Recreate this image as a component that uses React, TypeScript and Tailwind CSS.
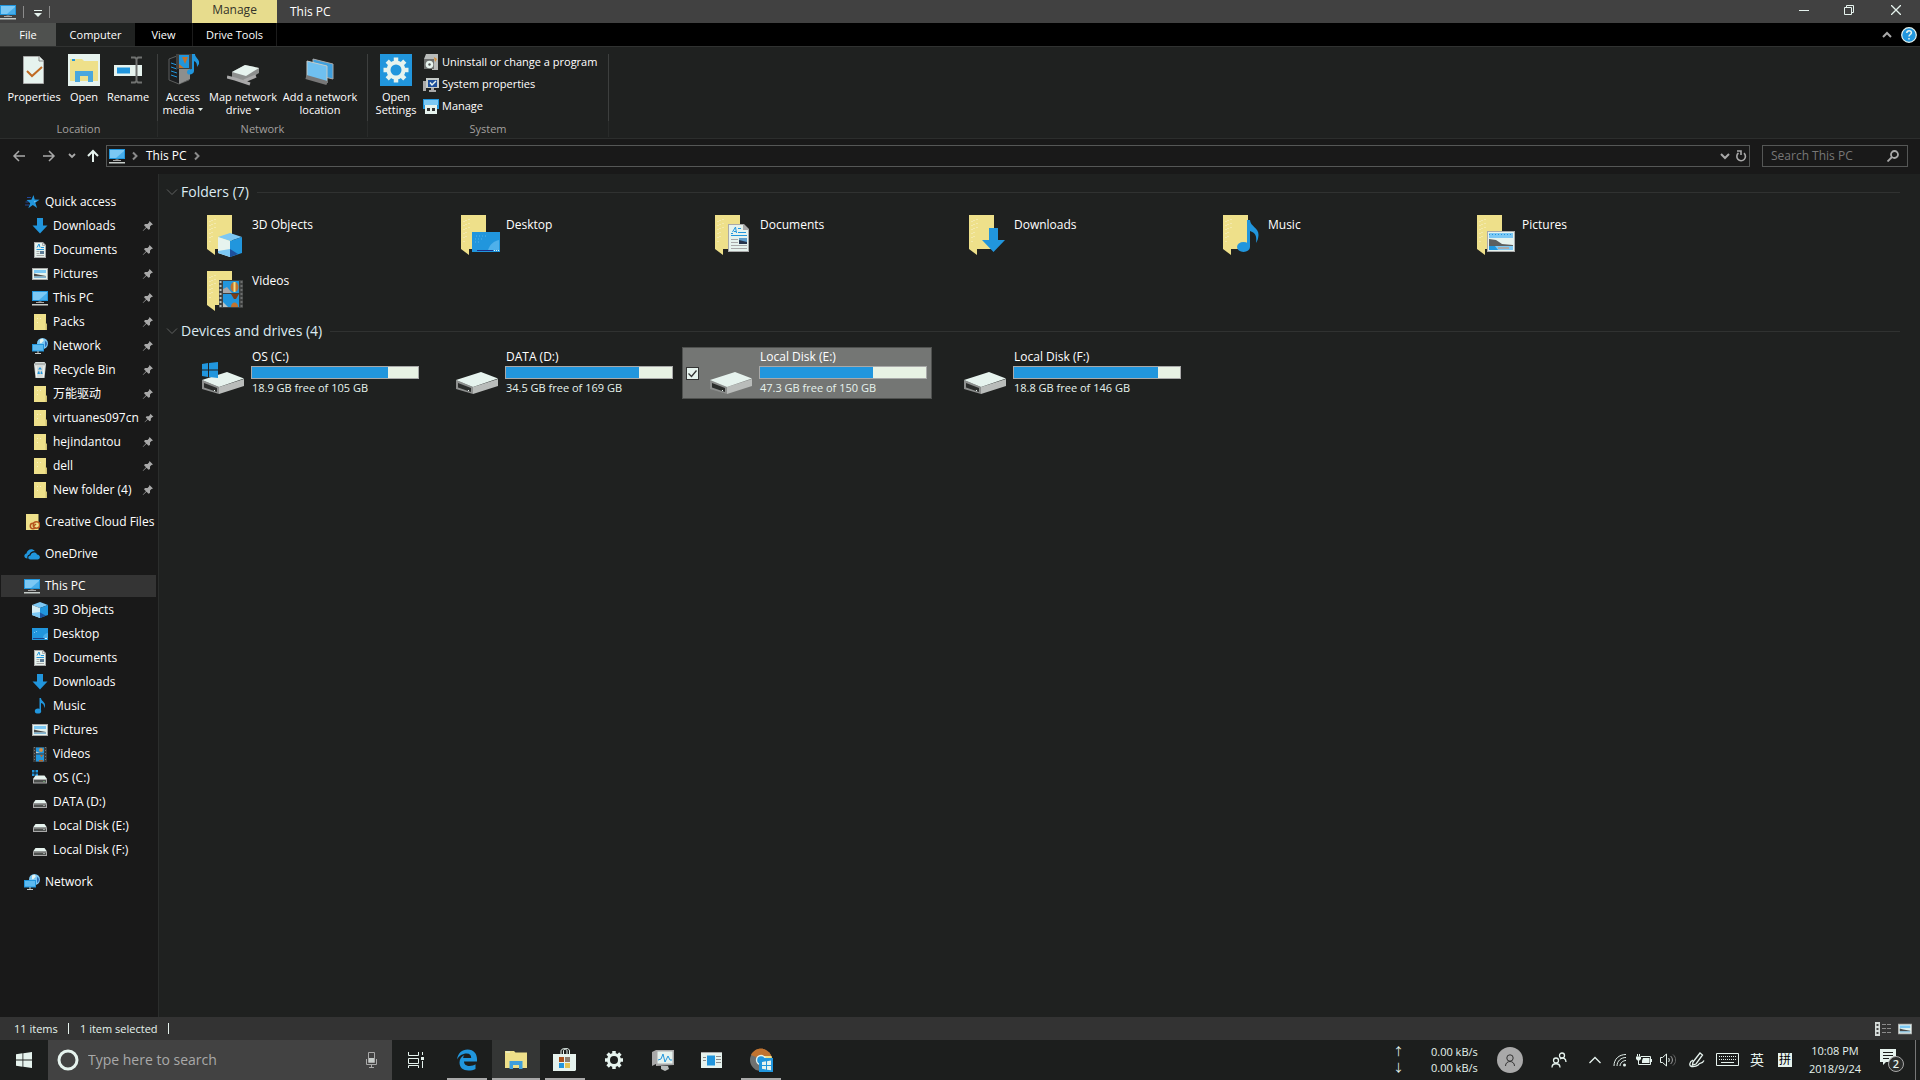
import clsx from 'clsx';
import { ReactNode } from 'react';

type IconName =
  | 'star'
  | 'download'
  | 'document'
  | 'picture'
  | 'pc'
  | 'folder'
  | 'network'
  | 'bin'
  | 'cloudFolder'
  | 'onedrive'
  | 'cube'
  | 'desktop'
  | 'music'
  | 'video'
  | 'osDrive'
  | 'drive';

const icons: Record<IconName, ReactNode> = {
  star: (
    <>
      <path d="M9.500 1l1.200 4.600 4.800.2-4.200 2.900 1.800 5.300-4.300-3-4.500 3.200 1.900-5L2.500 6l4.900-.3z" fill="#2196dd" />
      <path d="M3 3.500h4M1 11h4M1.500 8h3" stroke="#23489b" />
      <path d="M9.200 4l.6 3 3 .3-2.600 1.300" fill="#7cc8f4" />
    </>
  ),
  download: <path d="M5 0h6v7.500h4.500L8 15.500.500 7.500H5z" fill="#2196dd" />,
  document: (
    <>
      <path d="M2 0h9l3 3v13H2z" fill="#a9a9a9" />
      <path d="M3 1h7.500L13 3.500V15H3z" fill="#e6f3ee" />
      <path d="M10.500 1v2.500H13" fill="none" stroke="#a9a9a9" />
      <path d="M5 5.500L7 2l1 3.500M9 5.500h3M4.500 7.500h7.500" fill="none" stroke="#2196dd" />
      <path d="M4.500 9.500h3M4.500 11.500h3M4.500 13.500h7.500" stroke="#a9a9a9" />
      <path d="M8 9h4v3H8z" fill="#5a7a94" />
    </>
  ),
  picture: (
    <>
      <path d="M0 2h16v12H0z" fill="#a9a9a9" />
      <path d="M1 3h14v10H1z" fill="#e6f3ee" />
      <path d="M2 4h12v3H2z" fill="#7cc8f4" />
      <path d="M2 7.500l4 1 8 1.500v.500H2z" fill="#4a4a4a" />
      <path d="M2 10.500h12V12H2z" fill="#7fb5d5" />
    </>
  ),
  pc: (
    <>
      <path d="M0 1h16v10H0z" fill="#2196dd" />
      <path d="M1 2h14v8H1z" fill="#7cc8f4" />
      <path d="M15 3v7H7z" fill="#47adea" />
      <path d="M6.500 11h3v1.500h-3z" fill="#707070" />
      <path d="M4 12h8v1H4z" fill="#a9a9a9" />
      <path d="M0 14h16v1.500H0z" fill="#c6ccc9" />
    </>
  ),
  folder: (
    <>
      <path d="M2 0h12v9.500l1 .5v6H2z" fill="#eee08a" />
      <path d="M14 2v7.500l1 .5v6h-1.500V10" fill="#cfc070" />
      <path d="M5 4h1v1H5zM8 4h1v1H8zM5 8h1v1H5z" fill="#f7efc0" />
    </>
  ),
  network: (
    <>
      <circle cx="10.500" cy="5.500" r="5.500" fill="#7cc8f4" />
      <path d="M8 1.500c2-2 5 0 3 2s-2 2-3 1.500z" fill="#e6f3ee" />
      <path d="M13 3c3 1 2 5 0 6z" fill="#2d6cb8" />
      <path d="M0 6h12v7.500H0z" fill="#2196dd" />
      <path d="M1 7h10v5.500H1z" fill="#5dbaf0" />
      <path d="M5 13.500h2v1H5zM3 15h6v1H3z" fill="#c6ccc9" />
    </>
  ),
  bin: (
    <>
      <path d="M2 2l1.500-2h9L14 2l-1.500 14h-9z" fill="#d6dcda" />
      <path d="M3 1.500h10v1H3z" fill="#8b8f8d" />
      <path d="M4 4l.7 11M12 4l-.7 11" stroke="#f3f7f5" />
      <path d="M8 5l2 2.500H6zM5.500 11L7 8.500 8 12H5.500zM10.500 11L9 8.500 8.500 12h2z" fill="#2196dd" />
    </>
  ),
  cloudFolder: (
    <>
      <path d="M2 0h12.500v16H2z" fill="#eee08a" />
      <circle cx="9" cy="12" r="2.700" fill="none" stroke="#b5551f" strokeWidth="1.500" />
      <circle cx="12.500" cy="11" r="3.200" fill="#eee08a" stroke="#b5551f" strokeWidth="1.500" />
      <path d="M9 12.500l3-2.500" stroke="#b5551f" strokeWidth="1.500" />
    </>
  ),
  onedrive: (
    <>
      <path d="M3.500 12.500C-.500 12.500-.500 8 2.500 7.500 3 3.500 8 1.500 10.800 5 8 5 6 6.500 5.500 8.500 3.500 9 3 11 3.500 12.500z" fill="#2196dd" />
      <path d="M6.500 13.500c-3 0-3-4 0-4 .5-3.500 5.500-4 6.500-1 3.500 0 4 5 .5 5z" fill="#2196dd" />
    </>
  ),
  cube: (
    <>
      <path d="M8 0l8 3-8 3-8-3z" fill="#7cc8f4" />
      <path d="M0 3l8 3v10l-8-3z" fill="#d5eef5" />
      <path d="M16 3L8 6v10l8-3z" fill="#2196dd" />
      <path d="M0 11l8-1v6l-8-3z" fill="#7cc8f4" />
      <path d="M8 10.500l6 3.300L8 16z" fill="#1d55a0" />
    </>
  ),
  desktop: (
    <>
      <path d="M0 2h16v12H0z" fill="#2196dd" />
      <path d="M11 11c1-3 3-4 5-4v5h-5z" fill="#47adea" />
      <path d="M1 12.500h11" stroke="#1c3f86" />
      <path d="M13 12.500h2" stroke="#e6f3ee" />
      <path d="M2 6h1v1H2zM4 5h1v1H4z" fill="#7cc8f4" />
    </>
  ),
  music: (
    <>
      <ellipse cx="6" cy="13" rx="3.200" ry="2.600" fill="#2196dd" />
      <path d="M7.500 0H9c0 3 4.500 4 4 7.500-.2 1.200-.5 2-1 2.500.5-3-1-4.500-3-5v8H7.500z" fill="#2196dd" />
    </>
  ),
  video: (
    <>
      <path d="M1 1h14v15H1z" fill="#3a3a3a" />
      <path d="M2.500 1v15M13.500 1v15" stroke="#777" strokeDasharray="1 2" />
      <path d="M4 1.500h8v6H4zM4 8.500h8v7H4z" fill="#2196dd" />
      <circle cx="9" cy="4" r="2" fill="#d99146" />
      <path d="M4 5.500l4 1.500H4z" fill="#c8c8c8" />
      <path d="M8 9h3l-1.500 2.500zM7 14h4v1.500H7z" fill="#b5672a" />
    </>
  ),
  osDrive: (
    <>
      <path d="M0 0h2.500v2.500H0zM3.500 0H6v2.500H3.500zM0 3.500h2.500V6H0zM3.500 3.500H6V6H3.500z" fill="#2196dd" />
      <path d="M3.500 5.500h9L15 9H1z" fill="#e6f3ee" />
      <path d="M1 9h14v4.500H1z" fill="#a9a9a9" />
      <path d="M2 10h12v2.500H2z" fill="#4c4f4d" />
      <path d="M11.500 11h1v1h-1z" fill="#8fe08f" />
    </>
  ),
  drive: (
    <>
      <path d="M3.500 6h9L15 9.500H1z" fill="#e6f3ee" />
      <path d="M1 9.500h14V14H1z" fill="#a9a9a9" />
      <path d="M2 10.500h12V13H2z" fill="#4c4f4d" />
      <path d="M11.500 11h1v1h-1z" fill="#e6f3ee" />
    </>
  ),
};

function Icon({ name, className = 'h-4 w-4' }: { name: IconName; className?: string }) {
  return (
    <svg viewBox="0 0 16 16" className={clsx('shrink-0', className)} aria-hidden>
      {icons[name]}
    </svg>
  );
}

interface TreeItem {
  label: string;
  icon: IconName;
  top?: boolean;
  pinned?: boolean;
  active?: boolean;
}

const tree: TreeItem[][] = [
  [
    { label: 'Quick access', icon: 'star', top: true },
    { label: 'Downloads', icon: 'download', pinned: true },
    { label: 'Documents', icon: 'document', pinned: true },
    { label: 'Pictures', icon: 'picture', pinned: true },
    { label: 'This PC', icon: 'pc', pinned: true },
    { label: 'Packs', icon: 'folder', pinned: true },
    { label: 'Network', icon: 'network', pinned: true },
    { label: 'Recycle Bin', icon: 'bin', pinned: true },
    { label: '万能驱动', icon: 'folder', pinned: true },
    { label: 'virtuanes097cn', icon: 'folder', pinned: true },
    { label: 'hejindantou', icon: 'folder', pinned: true },
    { label: 'dell', icon: 'folder', pinned: true },
    { label: 'New folder (4)', icon: 'folder', pinned: true },
  ],
  [{ label: 'Creative Cloud Files', icon: 'cloudFolder', top: true }],
  [{ label: 'OneDrive', icon: 'onedrive', top: true }],
  [
    { label: 'This PC', icon: 'pc', top: true, active: true },
    { label: '3D Objects', icon: 'cube' },
    { label: 'Desktop', icon: 'desktop' },
    { label: 'Documents', icon: 'document' },
    { label: 'Downloads', icon: 'download' },
    { label: 'Music', icon: 'music' },
    { label: 'Pictures', icon: 'picture' },
    { label: 'Videos', icon: 'video' },
    { label: 'OS (C:)', icon: 'osDrive' },
    { label: 'DATA (D:)', icon: 'drive' },
    { label: 'Local Disk (E:)', icon: 'drive' },
    { label: 'Local Disk (F:)', icon: 'drive' },
  ],
  [{ label: 'Network', icon: 'network', top: true }],
];

// what lies over the lower right corner of each library folder
const folders: { label: string; overlay: ReactNode }[] = [
  {
    label: '3D Objects',
    overlay: (
      <>
        <path d="M32 23l12 4-12 4-12-4z" fill="#7cc8f4" />
        <path d="M20 27l12 4v16l-12-4z" fill="#e6f3ee" />
        <path d="M44 27l-12 4v16l12-4z" fill="#2196dd" />
        <path d="M20 41l12-2v8l-12-4z" fill="#7cc8f4" />
        <path d="M32 39l8 5-8 3z" fill="#1d4f9c" />
      </>
    ),
  },
  {
    label: 'Desktop',
    overlay: (
      <>
        <path d="M20 22h28v20H20z" fill="#2196dd" />
        <path d="M36 40c2-6 6-9 11-10v10z" fill="#4fb0ea" />
        <path d="M24 26h10M23 29h8M23 32h6" stroke="#55b4ec" strokeDasharray="1 2" />
        <path d="M25 40.500h16" stroke="#1c2f86" />
        <path d="M42 40.500h5" stroke="#e6f3ee" strokeDasharray="1 1" />
      </>
    ),
  },
  {
    label: 'Documents',
    overlay: (
      <>
        <path d="M22 14h16l5 5v23H22z" fill="#a9a9a9" />
        <path d="M23 15h14v5h5v21H23z" fill="#e6f3ee" />
        <path d="M25 23.500h2M26.500 22l3-5 1 6M28 21.500h2M32 18.500h3M32 22.500h8" fill="none" stroke="#2196dd" />
        <path d="M25 25.500h16" stroke="#2196dd" />
        <path d="M25 29.500h7M25 32.500h7M25 35.500h16M25 38.500h16" stroke="#a9a9a9" />
        <path d="M33 28h8v6h-8z" fill="#5d9dcb" />
        <path d="M33 30l8 2v2h-8z" fill="#26344c" />
      </>
    ),
  },
  {
    label: 'Downloads',
    overlay: <path d="M29 18h9v12h7L33.500 42 22 30h7z" fill="#2196dd" />,
  },
  {
    label: 'Music',
    overlay: (
      <>
        <ellipse cx="29.500" cy="37" rx="6.500" ry="5" fill="#2196dd" />
        <path d="M33 10h3c0 6 9 8 8.500 15-.2 3-1 6-2.500 8 1-8-1-10-6-12v16h-3z" fill="#2196dd" />
      </>
    ),
  },
  {
    label: 'Pictures',
    overlay: (
      <>
        <path d="M19 21h28v21H19z" fill="#a9a9a9" />
        <path d="M20 22h26v19H20z" fill="#e6f3ee" />
        <path d="M21 23h24v5H21z" fill="#7cc8f4" />
        <path d="M21 24.500h24" stroke="#2196dd" strokeDasharray="1 2" />
        <path d="M21 29l7 1 6 4 11 1v1H21z" fill="#5d5f5e" />
        <path d="M21 36h24v4H21z" fill="#7cc8f4" />
        <path d="M21 36h6l3 4h-9z" fill="#2196dd" />
        <path d="M30 38h11" stroke="#a9a9a9" strokeWidth="2" />
      </>
    ),
  },
  {
    label: 'Videos',
    overlay: (
      <>
        <path d="M21 14h24v28H21z" fill="#3f4140" />
        <path d="M22.500 15v26" stroke="#e6f3ee" strokeWidth="2" strokeDasharray="2 2" opacity=".7" />
        <path d="M43.500 15v26" stroke="#6d6f6e" strokeWidth="2" strokeDasharray="2 2" />
        <path d="M25 15h16v12H25zM25 28h16v13H25z" fill="#2196dd" />
        <ellipse cx="36.500" cy="21" rx="4" ry="5" fill="#c1732f" />
        <path d="M36.500 16v10" stroke="#eee08a" strokeWidth="2" />
        <path d="M25 23l4-2 5 6h-9z" fill="#a9a9a9" />
        <path d="M33 28h8l-3 5h-2z" fill="#7a3d17" />
        <path d="M33 41c0-6 7-6 7 0z" fill="#c1732f" />
        <path d="M25 36l5 5h-5z" fill="#b9c4c4" />
      </>
    ),
  },
];

const drives = [
  { label: 'OS (C:)', used: 82, free: '18.9 GB free of 105 GB', os: true },
  { label: 'DATA (D:)', used: 80, free: '34.5 GB free of 169 GB' },
  { label: 'Local Disk (E:)', used: 68, free: '47.3 GB free of 150 GB', selected: true },
  { label: 'Local Disk (F:)', used: 87, free: '18.8 GB free of 146 GB' },
];

function Chevron({ className, d }: { className?: string; d: string }) {
  return (
    <svg viewBox="0 0 12 12" className={clsx('h-3 w-3 shrink-0', className)} aria-hidden>
      <path d={d} fill="none" stroke="currentColor" strokeWidth="2" />
    </svg>
  );
}

const DOWN = 'M2 4l4 4 4-4';
const RIGHT = 'M4 2.500l3.500 3.500L4 9.500';

function TitleBar() {
  return (
    <header className="flex h-[23px] bg-[#414141]">
      <div className="flex w-48 items-center">
        <Icon name="pc" />
        <span className="ml-[7px] h-3 w-px bg-[#8b8b8b]" />
        <button aria-label="Customize Quick Access Toolbar" className="ml-2 h-4 w-3">
          <svg viewBox="0 0 12 16" className="h-4 w-3">
            <path d="M2 6.500h8" stroke="#e6f3ee" />
            <path d="M2 9h8l-4 4z" fill="#e6f3ee" />
          </svg>
        </button>
        <span className="ml-[5px] h-3 w-px bg-[#8b8b8b]" />
      </div>
      <div className="w-[85px] bg-[#e7dc8d] text-center leading-5 text-[#33332a]">Manage</div>
      <h1 className="ml-[13px] grow leading-6">This PC</h1>
      <div className="flex text-[#e6f3ee]">
        <button aria-label="Minimize" className="flex h-5 w-[46px] items-center justify-center">
          <svg viewBox="0 0 10 10" className="h-[10px] w-[10px]"><path d="M0 5.500h10" stroke="currentColor" /></svg>
        </button>
        <button aria-label="Restore" className="flex h-5 w-11 items-center justify-center">
          <svg viewBox="0 0 10 10" className="h-[10px] w-[10px]">
            <path d="M.5 2.500h7v7h-7zM2.500 2V.5h7v7H8" fill="none" stroke="currentColor" />
          </svg>
        </button>
        <button aria-label="Close" className="flex h-5 w-[49px] items-center justify-center">
          <svg viewBox="0 0 10 10" className="h-[10px] w-[10px]"><path d="M0 0l10 10M10 0L0 10" stroke="currentColor" strokeWidth="1.300" /></svg>
        </button>
      </div>
    </header>
  );
}

function RibbonTabs() {
  return (
    <div className="flex h-[23px] items-stretch bg-black text-[11px]">
      <button className="w-14 bg-[#4f514f]">File</button>
      <button className="w-[79px] bg-[#202221]">Computer</button>
      <button className="w-[57px]">View</button>
      <button className="w-[85px] border-x border-[#1c1c1c]">Drive Tools</button>
      <div className="ml-auto flex items-center pr-[3px]">
        <button aria-label="Collapse the Ribbon" className="mr-2 text-[#a9a9a9]">
          <Chevron d="M2 8l4-4 4 4" />
        </button>
        <button aria-label="Help">
          <svg viewBox="0 0 16 16" className="h-4 w-4">
            <circle cx="8" cy="8" r="7.300" fill="#2196dd" stroke="#e6f3ee" strokeWidth="1.200" />
            <path d="M5.800 6c0-3 4.600-3 4.600-.300C10.400 7.500 8 7.600 8 9.600M8 11v1.500" fill="none" stroke="#e6f3ee" strokeWidth="1.500" />
          </svg>
        </button>
      </div>
    </div>
  );
}

function RibbonButton({ width, lines, menu, children }: { width: string; lines: string[]; menu?: boolean; children: ReactNode }) {
  return (
    <button className={clsx('flex flex-col items-center', width)}>
      <svg viewBox="0 0 32 32" className="mb-1 h-8 w-8" aria-hidden>{children}</svg>
      {lines.map((line, i) => (
        <span key={line} className="flex items-center leading-[13px] whitespace-nowrap">
          {line}
          {menu && i === lines.length - 1 && (
            <svg viewBox="0 0 5 3" className="ml-1 h-[3px] w-[5px]" aria-hidden><path d="M0 0h5L2.500 3z" fill="#e6f3ee" /></svg>
          )}
        </span>
      ))}
    </button>
  );
}

function RibbonGroup({ label, width, children }: { label: string; width: string; children: ReactNode }) {
  return (
    <section aria-label={label} className={clsx('flex flex-col pt-[5px]', width)}>
      <div className="flex h-[67px] shrink-0 border-r border-[#3d3f3e] pl-1">{children}</div>
      <div className="border-r border-[#292b2a] text-center leading-4 text-[#a3a09f]">{label}</div>
    </section>
  );
}

function Ribbon() {
  return (
    <div className="flex h-[93px] border-t border-b border-[#303231] border-b-[#2c2e2d] bg-[#1f2120] pt-[2px] text-[11px]">
      <RibbonGroup label="Location" width="w-[158px]">
        <RibbonButton width="w-[60px]" lines={['Properties']}>
          <path d="M5.500 2.500h16l4 4v23h-20z" fill="#e6f3ee" stroke="#a9a9a9" />
          <path d="M21 2v5h5" fill="none" stroke="#8b8b8b" />
          <path d="M9 17l5 5 10-9" fill="none" stroke="#c06a22" strokeWidth="2" />
        </RibbonButton>
        <RibbonButton width="w-10" lines={['Open']}>
          <path d="M0 0h32v32H0z" fill="#e6f3ee" />
          <path d="M2 5h12l2 2h14v20H2z" fill="#eee08a" />
          <path d="M4 6h3" stroke="#2196dd" strokeWidth="2" />
          <path d="M7 17h18v11h-5v-6h-8v6H7z" fill="#4aa7dd" />
        </RibbonButton>
        <RibbonButton width="w-12" lines={['Rename']}>
          <path d="M2 11h28v11H2z" fill="#e6f3ee" />
          <path d="M5 13.500h13v6H5z" fill="#2196dd" />
          <path d="M24.500 4v24M19 3.500h4l1.500 1.500L26 3.500h4M19 28.500h4l1.500-1.500 1.500 1.500h4" fill="none" stroke="#707270" strokeWidth="2" />
        </RibbonButton>
      </RibbonGroup>
      <RibbonGroup label="Network" width="w-[210px]">
        <RibbonButton width="w-[42px]" lines={['Access', 'media']} menu>
          <path d="M2 5l8-3 12 3v21l-10 4-10-4z" fill="#1b1d1f" stroke="#5d5f5e" />
          <path d="M12 9l11-3v19l-11 5z" fill="#8d8f8e" />
          <path d="M4 9l6 2M4 13l6 2M4 17l6 2M4 21l6 2" stroke="#2196dd" />
          <path d="M9 0h16v15H9z" fill="#3f4140" />
          <path d="M12 1h10v13H12z" fill="#2196dd" />
          <path d="M15 3h6l-3 7zM12 10l5 4h-5z" fill="#c1732f" />
          <path d="M25 0h3c0 4 5 5 4 10l-2 3c0-4-1-5-3-6v10c0 4-7 5-7 1 0-2 2-3 5-3z" fill="#2196dd" />
        </RibbonButton>
        <RibbonButton width="w-[78px]" lines={['Map network', 'drive']} menu>
          <path d="M5 18l13-7 14 3v5l-13 8-14-3z" fill="#8d8f8e" />
          <path d="M5 18l13-7 14 3-13 8z" fill="#e6f3ee" />
          <path d="M0 23l8 2 15 5M17 27l12-5" fill="none" stroke="#a9a9a9" strokeWidth="3" />
        </RibbonButton>
        <RibbonButton width="w-[76px]" lines={['Add a network', 'location']}>
          <path d="M9 5l20 5v15l-20-5z" fill="#3f9fdc" stroke="#a9a9a9" />
          <path d="M3 7l20 5v17L3 24z" fill="#6fc0f0" stroke="#c6ccc9" />
          <path d="M2 23l21 6" stroke="#777" strokeWidth="4" />
        </RibbonButton>
      </RibbonGroup>
      <RibbonGroup label="System" width="w-[241px]">
        <RibbonButton width="w-12" lines={['Open', 'Settings']}>
          <path d="M0 0h32v32H0z" fill="#2196dd" />
          <path d="M16 3.500v25M3.500 16h25M7.200 7.200l17.600 17.600M24.800 7.200L7.200 24.800" stroke="#e6f3ee" strokeWidth="4.500" />
          <circle cx="16" cy="16" r="9.500" fill="#e6f3ee" />
          <circle cx="16" cy="16" r="5.500" fill="#2196dd" />
        </RibbonButton>
        <div className="ml-[3px] flex flex-col gap-[6px]">
          <button className="flex h-4 items-center gap-[3px] whitespace-nowrap">
            <svg viewBox="0 0 16 16" className="h-4 w-4" aria-hidden>
              <path d="M3 0h12v16H9V5H1z" fill="#b9bcba" />
              <path d="M1 5h10v10H1z" fill="#6f7170" />
              <circle cx="6.500" cy="10.500" r="3.800" fill="#e6f3ee" />
              <circle cx="6.500" cy="10.500" r="1.200" fill="#555" />
              <path d="M11 3l3 2-2 3z" fill="#d9913c" />
            </svg>
            Uninstall or change a program
          </button>
          <button className="flex h-4 items-center gap-[3px] whitespace-nowrap">
            <svg viewBox="0 0 16 16" className="h-4 w-4" aria-hidden>
              <path d="M0 5h3v10H0z" fill="#a9a9a9" />
              <path d="M3 2h13v10H3z" fill="#c6ccc9" />
              <path d="M5 4h9v7H5z" fill="#1d4f9c" />
              <path d="M7 6.500l2 2.500 4-4" fill="none" stroke="#e6f3ee" strokeWidth="1.500" />
              <path d="M8 12h3v2h2v2H6v-2h2z" fill="#a9a9a9" />
            </svg>
            System properties
          </button>
          <button className="flex h-4 items-center gap-[3px] whitespace-nowrap">
            <svg viewBox="0 0 16 16" className="h-4 w-4" aria-hidden>
              <path d="M0 1h16v10H0z" fill="#2196dd" />
              <path d="M1 2h14v5H1z" fill="#7cc8f4" />
              <path d="M2 7h12v9H2z" fill="#e6f3ee" />
              <path d="M4 10h3v3H4zM9 10h3v3H9z" fill="#333" />
            </svg>
            Manage
          </button>
        </div>
      </RibbonGroup>
    </div>
  );
}

function AddressBar() {
  return (
    <div className="flex h-[35px] items-center bg-[#191919] pr-3 pb-px">
      <div className="flex w-[106px] shrink-0 items-center pl-3 text-[#a9a9a9]">
        <button aria-label="Back">
          <svg viewBox="0 0 14 12" className="h-3 w-[14px]"><path d="M7 1L2 6l5 5M2 6h11" fill="none" stroke="currentColor" strokeWidth="1.500" /></svg>
        </button>
        <button aria-label="Forward" className="ml-4">
          <svg viewBox="0 0 14 12" className="h-3 w-[14px]"><path d="M7 1l5 5-5 5M12 6H1" fill="none" stroke="currentColor" strokeWidth="1.500" /></svg>
        </button>
        <button aria-label="Recent locations" className="ml-3">
          <svg viewBox="0 0 8 12" className="h-3 w-2"><path d="M1 4l3 3 3-3" fill="none" stroke="currentColor" strokeWidth="1.800" /></svg>
        </button>
        <button aria-label="Up" className="ml-[10px] text-[#e6f3ee]">
          <svg viewBox="0 0 14 14" className="h-[14px] w-[14px]"><path d="M2 7l5-5 5 5M7 2v11" fill="none" stroke="currentColor" strokeWidth="2" /></svg>
        </button>
      </div>
      <nav aria-label="Address" className="flex h-[22px] grow items-center border border-[#555756] pr-[2px] pl-[2px]">
        <Icon name="pc" />
        <Chevron d={RIGHT} className="ml-1 text-[#8b8b8b]" />
        <a href="#this-pc" className="ml-[5px]">This PC</a>
        <Chevron d={RIGHT} className="ml-1 text-[#8b8b8b]" />
        <button aria-label="Previous locations" className="ml-auto text-[#a9a9a9]"><Chevron d={DOWN} /></button>
        <button aria-label="Refresh" className="ml-1 text-[#a9a9a9]">
          <svg viewBox="0 0 12 12" className="h-3 w-3">
            <path d="M9 3.200a4.300 4.300 0 1 1-5.500-.2M2 1h4v4" fill="none" stroke="currentColor" strokeWidth="1.600" />
          </svg>
        </button>
      </nav>
      <div className="ml-3 flex h-[22px] w-[146px] items-center border border-[#555756] pr-2 pl-2">
        <input aria-label="Search This PC" placeholder="Search This PC" className="w-full min-w-0 bg-transparent outline-none placeholder:text-[#777]" />
        <svg viewBox="0 0 12 12" className="h-3 w-3 shrink-0 text-[#a9a9a9]" aria-hidden>
          <circle cx="7.500" cy="4.500" r="3.500" fill="none" stroke="currentColor" strokeWidth="1.800" />
          <path d="M5 7l-4.500 4.500" stroke="currentColor" strokeWidth="1.800" />
        </svg>
      </div>
    </div>
  );
}

function Sidebar() {
  return (
    <nav aria-label="Navigation pane" className="flex w-[158px] shrink-0 flex-col gap-2 bg-[#191919] pt-4 pr-[2px] pl-px">
      {tree.map(group => (
        <ul key={group[0].label + group.length}>
          {group.map(item => (
            <li key={item.label} className="flex h-6 items-center">
              <a
                href="#"
                className={clsx(
                  'flex h-[22px] w-full items-center gap-[5px] whitespace-nowrap',
                  item.top ? 'pl-[23px]' : 'pl-[31px]',
                  item.active && 'bg-[#343434]',
                )}>
                <Icon name={item.icon} />
                {item.label}
                {item.pinned && (
                  <svg viewBox="0 0 12 12" className="mr-[2px] -ml-1 h-3 w-3 grow-0 text-[#a9a9a9] [margin-left:auto]" aria-hidden>
                    <path d="M7.500 1L11 4.500 9.500 5 8 6.500 8 9 6.500 9.800 4.500 7.800 1 11l-.3-.3L4 7.300 2 5.300 3 4h2.500L7 2.500z" fill="currentColor" />
                  </svg>
                )}
              </a>
            </li>
          ))}
        </ul>
      ))}
    </nav>
  );
}

function GroupHeading({ children }: { children: ReactNode }) {
  return (
    <div className="flex h-[30px] items-center pr-5 pb-[2px] pl-[7px]">
      <svg viewBox="0 0 12 12" className="h-3 w-3 text-[#606261]" aria-hidden>
        <path d="M1 3.500l5 5 5-5" fill="none" stroke="currentColor" />
      </svg>
      <h2 className="ml-[3px] text-sm whitespace-nowrap text-[#dcebf2]">{children}</h2>
      <span className="ml-2 h-px grow bg-[#303231]" />
    </div>
  );
}

function Content() {
  return (
    <main className="grow border-l border-[#2b2d2c] bg-[#1f2120] pt-1">
      <GroupHeading>Folders (7)</GroupHeading>
      <div className="flex flex-wrap gap-1 pr-[200px] pb-px pl-[15px]">
        {folders.map(folder => (
          <a key={folder.label} href="#" className="flex h-[52px] w-[250px] pt-[2px] pl-6">
            <svg viewBox="0 0 48 48" className="h-12 w-12" aria-hidden>
              <path d="M9 5h25v34H17v6l-8-6z" fill="#eee08a" />
              <path d="M12 11v24M14 10v20M17 9v10" stroke="#f8f2cf" strokeDasharray="1 3" />
              {folder.overlay}
            </svg>
            <span className="ml-[6px] pt-[7px] leading-4">{folder.label}</span>
          </a>
        ))}
      </div>
      <GroupHeading>Devices and drives (4)</GroupHeading>
      <div className="flex flex-wrap gap-1 pl-[15px]">
        {drives.map(drive => (
          <div
            key={drive.label}
            className={clsx(
              'flex h-[52px] w-[250px] border',
              drive.selected ? 'border-[#4f514f] bg-[#747674]' : 'border-transparent',
            )}>
            <div className="grid w-[23px] shrink-0 place-items-center pr-1">
              {drive.selected && (
                <span className="grid">
                  <input
                    type="checkbox"
                    defaultChecked
                    aria-label={drive.label}
                    className="col-start-1 row-start-1 h-[13px] w-[13px] appearance-none border border-[#333] bg-[#e6f3ee]"
                  />
                  <svg viewBox="0 0 13 13" className="pointer-events-none col-start-1 row-start-1 h-[13px] w-[13px]" aria-hidden>
                    <path d="M2.500 6.500l3 3 5-6" fill="none" stroke="#333" strokeWidth="1.300" />
                  </svg>
                </span>
              )}
            </div>
            <svg viewBox="0 0 48 48" className="mt-px h-12 w-12 shrink-0" aria-hidden>
              <path d="M4 31l17 7v7L4 40z" fill="#8d8f8e" />
              <path d="M6 34l13 5v4L6 38.500z" fill="#2b2d2c" />
              <path d="M21 38l25-8v7l-25 8z" fill="#b9bcba" />
              <path d="M4 31l25-8 17 6.500L21 38z" fill="#e6f3ee" />
              <path d="M16.500 41v1" stroke="#e6f3ee" />
              {drive.os && (
                <path d="M4 15l6-1v6.500H4zM11 14l9-1v7.500h-9zM4 21.500h6V28l-6-1zM11 21.500h9V29l-9-1z" fill="#2196dd" />
              )}
            </svg>
            <div className="ml-[5px] w-[168px]">
              <div className="pl-px leading-[18px]">{drive.label}</div>
              <div className="h-[13px] border border-[#a9a9a9] bg-[#e8f2e4]" role="progressbar" aria-label={drive.label} aria-valuenow={drive.used}>
                <div className="h-full bg-[#2196dd]" style={{ width: `${drive.used}%` }} />
              </div>
              <div className="pl-px text-[11px] leading-[18px] text-[#e6f3ee]">{drive.free}</div>
            </div>
          </div>
        ))}
      </div>
    </main>
  );
}

function StatusBar() {
  return (
    <footer className="flex h-[23px] items-center bg-[#333] pl-[14px] text-[11px] text-[#e6f3ee]">
      <span className="w-[54px]">11 items</span>
      <span className="mr-[11px] h-[11px] w-px bg-[#e6f3ee]" />
      <span className="w-[88px]">1 item selected</span>
      <span className="h-[11px] w-px bg-[#e6f3ee]" />
      <button aria-label="Details view" className="ml-auto">
        <svg viewBox="0 0 17 14" className="h-[14px] w-[17px]">
          <path d="M0 0h5v14H0z" fill="#d6dcda" />
          <path d="M2.500 2v2M2.500 6v2M2.500 10v2" stroke="#444" strokeWidth="2" />
          <path d="M7 2.500h4M12 2.500h4M7 6.500h4M12 6.500h4M7 10.500h4M12 10.500h4" stroke="#8b8b8b" />
        </svg>
      </button>
      <button aria-label="Large icons view" className="mr-2 ml-[6px]">
        <Icon name="picture" className="h-[14px] w-[14px]" />
      </button>
    </footer>
  );
}

function TaskButton({ label, open, active, children }: { label: string; open?: boolean; active?: boolean; children: ReactNode }) {
  return (
    <button aria-label={label} className={clsx('mr-px flex h-10 w-12 flex-col items-center justify-end', active && 'bg-[#343635]')}>
      <svg viewBox="0 0 24 24" className="mb-[6px] h-6 w-6" aria-hidden>{children}</svg>
      <span className={clsx('h-[2px]', active ? 'w-12' : 'w-10', (open || active) && 'bg-[#a9a9a9]')} />
    </button>
  );
}

function TrayIcon({ label, width, children }: { label: string; width: string; children: ReactNode }) {
  return (
    <button aria-label={label} className={clsx('flex h-10 items-center justify-center text-[#e6f3ee]', width)}>
      {children}
    </button>
  );
}

function Taskbar() {
  return (
    <div className="flex h-10 items-center bg-[#1c1e1d]">
      <button aria-label="Start" className="flex h-10 w-12 items-center justify-center">
        <svg viewBox="0 0 16 16" className="h-4 w-4">
          <path d="M0 2.200l6.500-.9v6.200H0zM7.300 1.200L16 0v7.500H7.300zM0 8.500h6.500v6.200L0 13.800zM7.300 8.500H16V16l-8.700-1.200z" fill="#e6f3ee" />
        </svg>
      </button>
      <div className="flex h-10 w-[344px] items-center bg-[#424242] pr-[15px] pl-[9px]">
        <svg viewBox="0 0 22 22" className="h-[22px] w-[22px] shrink-0" aria-hidden>
          <circle cx="11" cy="11" r="9" fill="none" stroke="#e6f3ee" strokeWidth="3" />
        </svg>
        <input aria-label="Type here to search" placeholder="Type here to search" className="ml-[9px] w-full min-w-0 bg-transparent text-sm outline-none placeholder:text-[#a9a9a9]" />
        <svg viewBox="0 0 11 16" className="h-4 w-[11px] shrink-0" aria-hidden>
          <path d="M2.500.5h6v10h-6zM.5 7v5.500h10V7M5.500 12.500v3M3 15.500h5" fill="none" stroke="#a9a9a9" />
          <path d="M3 6h5v4H3z" fill="#c6ccc9" />
        </svg>
      </div>
      <div className="flex">
        <TaskButton label="Task View">
          <path d="M4.500 4v3.500h10V4M4.500 10.500h10v5h-10zM4.500 20v-2.500h10V20M18.500 4v3M18.500 13v7" fill="none" stroke="#e6f3ee" />
          <path d="M17 9h3v3h-3z" fill="#e6f3ee" />
        </TaskButton>
        <span className="w-[2px]" />
        <TaskButton label="Microsoft Edge" open>
          <path d="M2 11.500C3 5 7 1.500 12.500 1.500 19 1.500 22 6 22 11v2.500H9c0 3 2.500 4.500 5.500 4.500 2.500 0 4.500-.8 6-1.700V21c-2 1-4.500 1.500-7 1.500-5.500 0-9-3-9-8 0-3.500 2-6 5-7.500-1 1-1.200 2-1.300 3h8c0-3-1.500-4.500-4.500-4.500C7.500 5.500 4 7.800 2 11.500z" fill="#2196dd" />
        </TaskButton>
        <TaskButton label="File Explorer" active>
          <path d="M1 3h9l1.500 1.500H23V20H1z" fill="#eee08a" />
          <path d="M2 4h4" stroke="#e6f3ee" />
          <path d="M5.500 13h13v8H15v-4H9v4H5.500z" fill="#3f9fdc" />
        </TaskButton>
        <TaskButton label="Microsoft Store" open>
          <path d="M8 6V3c0-3 6-3 6 0v3M10.500 6V2.500c1-3 6-2.500 6 .5v3" fill="none" stroke="#e6f3ee" />
          <path d="M0 6h23v16l-1 1H0z" fill="#e6f3ee" />
          <path d="M6 9h5v5H6z" fill="#a8501c" />
          <path d="M12 9h5v5h-5z" fill="#8b7d6f" />
          <path d="M6 15h5v5H6z" fill="#2196dd" />
          <path d="M12 15h5v5h-5z" fill="#e4c352" />
        </TaskButton>
        <TaskButton label="Settings">
          <path d="M12 3v18M3 12h18M5.600 5.600l12.800 12.800M18.400 5.600L5.600 18.400" stroke="#e6f3ee" strokeWidth="3.500" />
          <circle cx="12" cy="12" r="7" fill="#e6f3ee" />
          <circle cx="12" cy="12" r="4" fill="#1c1e1d" />
        </TaskButton>
        <TaskButton label="Resource Monitor">
          <path d="M1 4l4-2v14l-4 2z" fill="#a9a9a9" />
          <path d="M5 2h18v15l-18 1z" fill="#a9a9a9" />
          <path d="M6.500 3.500h15v12h-15z" fill="#e6f3ee" />
          <path d="M7 12l3-1 2-5 2 8 3-6 2 4h2" fill="none" stroke="#2196dd" />
          <path d="M10 18h7l1 3-4 2-4-2z" fill="#b9bcba" />
        </TaskButton>
        <TaskButton label="Reader">
          <path d="M1 4h21v16H1z" fill="#e6f3ee" />
          <path d="M1 4.500h21" stroke="#a9a9a9" />
          <path d="M7 7.500h8v10H7z" fill="#2196dd" />
          <path d="M3 9.500h3M3 12.500h3M16 8.500h5M16 11.500h5M16 14.500h5" stroke="#8b8b8b" />
        </TaskButton>
        <TaskButton label="Chrome" open>
          <circle cx="12" cy="12" r="11" fill="#6f7170" />
          <path d="M2 7C7-2 18-1 22 7l1 4H12z" fill="#c1732f" />
          <path d="M14 8h8.500c1 3 0 5-1 7H14z" fill="#eee08a" />
          <circle cx="12" cy="12" r="5.200" fill="#e6f3ee" />
          <circle cx="12" cy="12" r="3.800" fill="#2196dd" />
          <path d="M10 10h14v14H10z" fill="#2196dd" />
          <path d="M13 14l4-.7V17h-4zM18 13.200l4-.7V17h-4zM13 18h4v3.500l-4-.7zM18 18h4v4.300l-4-.6z" fill="#e6f3ee" />
        </TaskButton>
      </div>

      <div className="ml-auto flex items-center text-[11px] text-[#e6f3ee]">
        <div className="grid w-[97px] grid-cols-[38px_1fr] leading-4">
          <span>↑</span>
          <span className="whitespace-nowrap">0.00 kB/s</span>
          <span>↓</span>
          <span className="whitespace-nowrap">0.00 kB/s</span>
        </div>
        <TrayIcon label="Account" width="w-10">
          <svg viewBox="0 0 26 26" className="h-[26px] w-[26px]">
            <circle cx="13" cy="13" r="13" fill="#a9a9a9" />
            <circle cx="13" cy="11" r="3.200" fill="none" stroke="#333" />
            <path d="M8.500 19c0-6 9-6 9 0" fill="none" stroke="#333" />
          </svg>
        </TrayIcon>
        <TrayIcon label="People" width="ml-[6px] w-[46px]">
          <svg viewBox="0 0 16 16" className="h-4 w-4">
            <g fill="none" stroke="currentColor" strokeWidth="1.300">
              <circle cx="5" cy="8.500" r="2.500" />
              <path d="M1 15.500c0-5 8-5 8 0" />
              <circle cx="11" cy="3.500" r="2.500" />
              <path d="M9 7c3-2 6-.5 6 3" />
            </g>
          </svg>
        </TrayIcon>
        <TrayIcon label="Show hidden icons" width="w-[26px]">
          <svg viewBox="0 0 12 8" className="h-2 w-3"><path d="M.5 7L6 1.500 11.500 7" fill="none" stroke="currentColor" strokeWidth="1.300" /></svg>
        </TrayIcon>
        <TrayIcon label="Wi-Fi" width="w-6">
          <svg viewBox="0 0 14 14" className="h-[14px] w-[14px]">
            <path d="M1 13C1 6 6 1.500 13 1.500M4 13c0-5 4-8.500 9-8.500M7 13c0-3 3-5.500 6-5.500" fill="none" stroke="currentColor" />
            <circle cx="11.500" cy="12" r="1.500" fill="currentColor" />
          </svg>
        </TrayIcon>
        <TrayIcon label="Battery" width="w-6">
          <svg viewBox="0 0 16 12" className="h-3 w-4">
            <path d="M5 2.500h9.500v8H5M15.500 5v3" fill="none" stroke="currentColor" />
            <path d="M7 4h6.500v5H6V6.500z" fill="currentColor" />
            <path d="M1.500 0v2.500M3.500 0v2.500M2.500 6v4.500H5" fill="none" stroke="currentColor" />
            <path d="M0 2.500h5V5L3.500 6.500h-2L0 5z" fill="currentColor" />
          </svg>
        </TrayIcon>
        <TrayIcon label="Volume" width="w-6">
          <svg viewBox="0 0 16 14" className="h-[14px] w-4">
            <path d="M.5 4.500h2L6.500 1v12l-4-3.500h-2zM8.500 5c1 1 1 3 0 4" fill="none" stroke="currentColor" />
            <path d="M10.500 3c2.500 2 2.500 6 0 8" fill="none" stroke="#a9a9a9" />
            <path d="M13 1.500c3.500 3 3.500 8 0 11" fill="none" stroke="#666" />
          </svg>
        </TrayIcon>
        <TrayIcon label="Pen" width="ml-[3px] w-7">
          <svg viewBox="0 0 16 16" className="h-4 w-4">
            <path d="M4 10l7-9 2.500 2L7 12l-3.500 1zM4 8c-4 2-4 6-1.500 6.500S9 14 10 12s3 .5 5-3.500" fill="none" stroke="currentColor" strokeWidth="1.300" />
          </svg>
        </TrayIcon>
        <TrayIcon label="Touch keyboard" width="w-8">
          <svg viewBox="0 0 23 14" className="h-[14px] w-[23px]">
            <path d="M.5.5h22v12H.5z" fill="none" stroke="currentColor" />
            <path d="M3 3.500h17M3 6.500h17" stroke="currentColor" strokeDasharray="1 1" />
            <path d="M5 9.500h13" stroke="currentColor" />
          </svg>
        </TrayIcon>
        <button className="w-7 text-sm">英</button>
        <button className="ml-[7px] flex h-[14px] w-[14px] items-center justify-center bg-[#e6f3ee] text-[12px] leading-[14px] text-black">拼</button>
        <button className="ml-3 w-[62px] text-center leading-[18px] whitespace-nowrap">
          10:08 PM
          <br />
          2018/9/24
        </button>
        <TrayIcon label="2 new notifications" width="ml-[3px] w-[46px] pl-[2px]">
          <svg viewBox="0 0 26 26" className="h-[26px] w-[26px]">
            <path d="M0 2h16v13H6l-3 3v-3H0z" fill="#e6f3ee" />
            <path d="M3 5.500h10M3 8.500h10M3 11.500h6" stroke="#1c1e1d" />
            <circle cx="16" cy="17" r="7.500" fill="#2c2e2d" stroke="#a9a9a9" />
            <text x="16" y="21" textAnchor="middle" fontSize="11" fontWeight="600" fill="#e6f3ee">2</text>
          </svg>
        </TrayIcon>
        <button aria-label="Show desktop" className="h-10 w-[5px] border-l border-[#777]" />
      </div>
    </div>
  );
}

export default function App() {
  return (
    <div className="flex min-h-screen flex-col bg-[#1f2120] font-['Open_Sans','Noto_Sans_CJK_SC',sans-serif] text-[12px] leading-4 text-white">
      <TitleBar />
      <RibbonTabs />
      <Ribbon />
      <AddressBar />
      <div className="flex grow">
        <Sidebar />
        <Content />
      </div>
      <StatusBar />
      <Taskbar />
    </div>
  );
}
